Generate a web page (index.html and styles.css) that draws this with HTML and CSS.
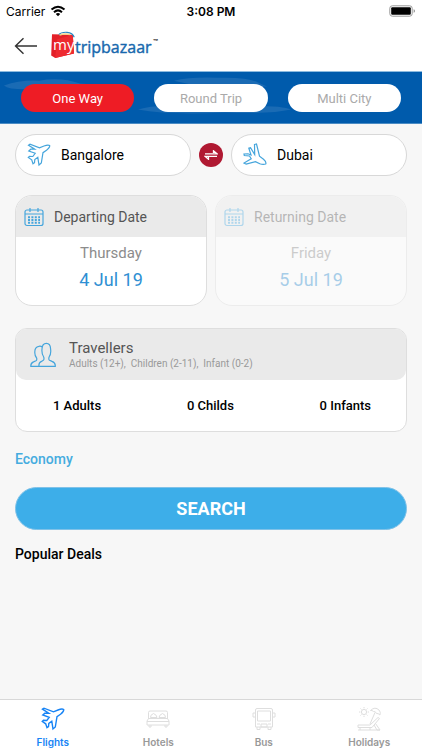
FILE: index.html
```html
<!DOCTYPE html>
<html lang="en">
<head>
<meta charset="utf-8">
<meta name="viewport" content="width=device-width, initial-scale=1">
<title>mytripbazaar</title>
<link rel="stylesheet" href="styles.css">
</head>
<body>
<svg class="defs" aria-hidden="true">
  <symbol id="plane" viewBox="0 0 24 24">
    <path d="M1.5 2.2 L3 1.2 L12.5 4.8 L17 3 Q21 1.4 22.7 2.5 Q23 4.5 19.5 7.2 L16 9.7 L14.3 20 L12 22 L10.8 14.3 L7.8 16.5 L7.5 19.7 L6 20.7 L4.7 16.8 L1.3 14.5 L2.5 13.3 L5.8 13.5 L8.2 10.3 L1.8 8 L3.8 6.2 L7.8 6.2 Z"/>
  </symbol>
  <symbol id="landing" viewBox="0 0 24 24">
    <path d="M11.5 1.5 L13.5 1 L16.5 13.2 L20.5 16.2 Q23.7 19 22.7 21 Q20 22 16.8 20.7 L12.5 18.6 L3.2 21.2 L1 20 L8.2 15.8 L6.5 13 L1.3 12.5 L1 11 L5 10.8 L8 12 L5.8 5.2 L7.5 4.8 L11.7 11.5 Z"/>
  </symbol>
  <symbol id="calendar" viewBox="0 0 20 20">
    <rect x="1" y="3" width="18" height="15.5" rx="2"/>
    <path d="M1 7H19M6 1V5M14 1V5"/>
    <path stroke-width="2" stroke-dasharray="2 1.4" d="M4 10.2H16M4 13H16M4 15.8H16"/>
  </symbol>
</svg>

<div class="app">
  <div class="status">
    <span class="carrier">Carrier
      <svg width="16" height="12" viewBox="0 0 16 12" aria-hidden="true"><g fill="none" stroke="#000" stroke-width="2"><path d="M1.5 4.6Q8-1.2 14.5 4.6M4 7.2Q8 3.6 12 7.2"/></g><path d="M5.8 9Q8 7.2 10.2 9L8 11.3Z"/></svg>
    </span>
    <time class="clock">3:08 PM</time>
    <svg class="battery" width="27" height="12" viewBox="0 0 27 12" aria-hidden="true"><rect x=".8" y=".8" width="22.4" height="10.4" rx="2.5" fill="#fff" stroke="#999"/><rect x="2.2" y="2.2" width="19.6" height="7.6" rx="1"/><path d="M24.7 4Q27.2 6 24.7 8Z" fill="#888"/></svg>
  </div>

  <header class="header">
    <button class="back" aria-label="Back"><svg width="24" height="18" viewBox="0 0 24 18"><path d="M23 9H1.5M9.5 1.2L1.5 9L9.5 16.8" fill="none" stroke="#333" stroke-width="1.4"/></svg></button>
    <svg class="logo" width="114" height="30" viewBox="0 0 114 30" role="img" aria-label="mytripbazaar">
      <path d="M2 3.2L22.8 3.8L24 22.5L5.2 27L1.2 24.5Z" fill="#e32028"/>
      <path d="M22.8 3.8L24 22.5L5.2 27L7.2 8.2Z" fill="#ee2a30"/>
      <path d="M8.8 3.6Q11 1 17 1.3Q22.8 1.8 24.2 6.2" fill="none" stroke="#2587c4" stroke-width="1.2"/>
      <path d="M9.5 4.2Q14 2 20.5 3.6" fill="none" stroke="#f4d48a" stroke-width="1.4"/>
      <text class="logo-my" x="3" y="19">my</text>
      <text class="logo-name" x="25" y="22">tripbazaar</text>
      <text class="logo-tm" x="103" y="14">™</text>
    </svg>
  </header>

  <nav class="trip-types" aria-label="Trip type">
    <svg class="clouds" viewBox="0 0 422 53" preserveAspectRatio="none" aria-hidden="true"><g fill="#1a6bb4"><path d="M4 14Q20 8 39 9Q61 5 80 12L120 15V18H25Q8 18 4 14Z"/><path d="M174 9Q190 5 218 6Q248 5 258 11L267 15H200Z"/><path d="M138 39Q155 34 178 36Q210 32 248 35Q283 35 291 39Q270 44 225 42Q170 45 138 39Z"/></g></svg>
    <button class="trip active" aria-pressed="true">One Way</button>
    <button class="trip" aria-pressed="false">Round Trip</button>
    <button class="trip" aria-pressed="false">Multi City</button>
  </nav>

  <main class="content">
    <div class="route">
      <button class="place"><svg class="line-icon" width="24" height="24"><use href="#plane"/></svg>Bangalore</button>
      <button class="swap" aria-label="Swap cities"><svg width="14" height="10" viewBox="0 0 14 10"><path d="M1 3.8H13L9.5 .8V3M13 6.3H1L4.5 9.3V7" fill="none" stroke="#fff" stroke-width="1.3"/></svg></button>
      <button class="place"><svg class="line-icon" width="24" height="24"><use href="#landing"/></svg>Dubai</button>
    </div>

    <div class="dates">
      <button class="card date">
        <span class="date-head"><svg class="line-icon" width="20" height="20"><use href="#calendar"/></svg>Departing Date</span>
        <span class="weekday">Thursday</span>
        <span class="day">4 Jul 19</span>
      </button>
      <button class="card date" disabled>
        <span class="date-head"><svg class="line-icon" width="20" height="20"><use href="#calendar"/></svg>Returning Date</span>
        <span class="weekday">Friday</span>
        <span class="day">5 Jul 19</span>
      </button>
    </div>

    <section class="card travellers">
      <div class="travellers-head">
        <svg class="line-icon" width="26" height="26" viewBox="0 0 26 26" aria-hidden="true"><path d="M9 24.3H25.3Q25.6 20.8 22 19.4L19.5 18.2Q18.4 17.5 19.1 15Q21.3 12.2 20.6 7Q20.4 1.4 16.4 1.4Q12.2 1.4 12 7Q11.5 12.2 13.7 15Q14.4 17.5 13.3 18.2L11.5 19.4Q8.4 20.8 9 24.3Z"/><path d="M12.4 5Q10.8 3.8 8.8 4.3Q4.6 5 4.8 10.5Q4.7 13.8 6.6 16Q7.2 18 6 18.7L3.5 19.9Q.6 21.2.8 24.3H9"/></svg>
        <div>
          <h2>Travellers</h2>
          <p>Adults (12+),&nbsp; Children (2-11),&nbsp; Infant (0-2)</p>
        </div>
      </div>
      <div class="counts">
        <button>1 Adults</button>
        <button>0 Childs</button>
        <button>0 Infants</button>
      </div>
    </section>

    <button class="cabin">Economy</button>
    <button class="search">SEARCH</button>
    <h2 class="deals">Popular Deals</h2>
  </main>

  <nav class="tabs" aria-label="Main">
    <a class="tab current" href="#flights" aria-current="page"><svg width="24" height="24"><use href="#plane"/></svg>Flights</a>
    <a class="tab" href="#hotels"><svg width="24" height="24" viewBox="0 0 24 24"><path d="M2.5 12V5.5Q2.5 4 4 4H20Q21.5 4 21.5 5.5V12M4.5 10.5Q4 8 7.5 6.5Q11 8 11 10.5ZM13 10.5Q13 8 16.5 6.5Q20 8 19.5 10.5ZM2.5 11.5H21.5L23 14V18H1V14ZM1 14.5H23M3 18V20H5V18M19 18V20H21V18"/></svg>Hotels</a>
    <a class="tab" href="#bus"><svg width="24" height="24" viewBox="0 0 24 24"><path d="M3.5 20V3Q3.5 1.5 5 1.5H19Q20.5 1.5 20.5 3V20ZM5.5 4H18.5V14H5.5ZM3.5 6H1V10H3M20.5 6H23V10H21M5 17H8M16 17H19M9 17H15V20H9ZM5 20V22.5H8V20M16 20V22.5H19V20"/></svg>Bus</a>
    <a class="tab" href="#holidays"><svg width="24" height="24" viewBox="0 0 24 24"><circle cx="7" cy="5" r="2.6"/><path d="M7 0V1.3M7 8.7V10M2 5H3.3M10.7 5H12M3.5 1.5L4.5 2.5M9.5 7.5L10.5 8.5M3.5 8.5L4.5 7.5M9.5 2.5L10.5 1.5M13.5 3.5Q18-.8 22 3Q24 5 23 8Q21 6 19.5 6.5Q18.5 4 16.5 4.5Q15 3 13.5 3.5ZM18 5.5L13 17M1 18H13L21 10.5L22.5 11.5L15 20.5H1ZM3 20.5V23M13 20.5V23M17 18L20 23H23L18.5 16.5M1 23H23"/></svg>Holidays</a>
  </nav>
</div>
</body>
</html>
```

FILE: styles.css
```css
* {
  box-sizing: border-box;
}

body {
  margin: 0;
  background: #f7f7f7;
  color: #000;
  font-family: Roboto, "Liberation Sans", sans-serif;
  font-size: 15px;
}

button {
  margin: 0;
  padding: 0;
  border: 0;
  background: none;
  color: inherit;
  font: inherit;
}

h2,
p {
  margin: 0;
}

svg {
  flex: none;
}

.defs {
  position: absolute;
  width: 0;
  height: 0;
}

.app {
  display: flex;
  flex-direction: column;
  min-height: 100vh;
}

.status {
  display: grid;
  grid-template-columns: 1fr auto 1fr;
  align-items: center;
  height: 22px;
  padding: 0 6px;
  background: #fff;
  font-family: Inter, Roboto, sans-serif;
  font-size: 12px;
}

.carrier {
  display: flex;
  align-items: center;
  gap: 5px;
}

.clock {
  font-weight: 600;
}

.battery {
  justify-self: end;
}

.header {
  display: flex;
  align-items: center;
  gap: 12px;
  height: 49px;
  padding: 0 14px 2px;
  background: #fff;
}

.back {
  display: flex;
}

.logo-my {
  fill: #fff;
  font-family: "Open Sans", sans-serif;
  font-size: 15px;
}

.logo-name {
  fill: #1768ad;
  stroke: #1768ad;
  stroke-width: 0.4;
  font-family: "Open Sans", sans-serif;
  font-size: 16px;
}

.logo-tm {
  fill: #222;
  font-family: Inter, sans-serif;
  font-size: 8px;
  font-weight: 600;
}

.trip-types {
  position: relative;
  display: flex;
  gap: 20px;
  padding: 12px 21px 11px;
  border-top: 1px solid #8dbbdf;
  border-bottom: 1px solid #4b8cc4;
  background: #005bac;
}

.clouds {
  position: absolute;
  inset: 0;
  width: 100%;
  height: 100%;
}

.trip {
  position: relative;
  flex: 1;
  height: 28px;
  border-radius: 14px;
  background: #fff;
  color: #aaa;
  font-size: 13px;
}

.trip.active {
  background: #ee1c25;
  color: #fff;
}

.content {
  display: flex;
  flex: 1;
  flex-direction: column;
  padding: 10px 15px;
}

.line-icon {
  fill: none;
  stroke: #45a5dc;
  stroke-width: 1.2;
}

.route {
  display: flex;
  align-items: center;
  gap: 8px;
}

.place {
  display: flex;
  flex: 1;
  align-items: center;
  gap: 10px;
  height: 42px;
  padding: 0 11px;
  border: 1px solid #d8d8d8;
  border-radius: 21px;
  background: #fff;
  font-size: 14px;
}

.swap {
  display: grid;
  place-items: center;
  width: 24px;
  height: 24px;
  border-radius: 50%;
  background: #b01932;
}

.dates {
  display: flex;
  gap: 8px;
  margin-top: 19px;
}

.card {
  overflow: hidden;
  border: 1px solid #dedede;
  border-radius: 17px;
  background: #fff;
}

.date {
  display: flex;
  flex: 1;
  flex-direction: column;
  height: 111px;
}

.date:disabled {
  opacity: 0.4;
}

.date-head {
  display: flex;
  align-items: center;
  gap: 10px;
  width: 100%;
  height: 41px;
  padding: 0 8px;
  background: #eaeaea;
  color: #555;
  font-size: 14px;
}

.weekday,
.day {
  width: 100%;
  text-align: center;
}

.weekday {
  margin-top: 6px;
  color: #8c8c8c;
  line-height: 20px;
}

.day {
  margin-top: 4px;
  color: #2f8fd3;
  font-size: 18px;
  line-height: 26px;
}

.travellers {
  margin-top: 22px;
  border-radius: 12px;
}

.travellers-head {
  display: flex;
  align-items: center;
  gap: 13px;
  height: 51px;
  padding: 0 14px;
  border-radius: 0 0 10px 10px;
  background: #eaeaea;
}

.travellers h2 {
  color: #555;
  font-size: 15px;
  font-weight: 400;
  line-height: 18px;
}

.travellers p {
  color: #999;
  font-size: 10px;
  line-height: 14px;
}

.counts {
  display: flex;
  justify-content: space-between;
  height: 51px;
  padding: 0 35px 0 37px;
  font-size: 13px;
  font-weight: 500;
}

.cabin {
  align-self: flex-start;
  margin-top: 17px;
  color: #45acdf;
  font-size: 14px;
  font-weight: 500;
  line-height: 20px;
}

.search {
  height: 43px;
  margin-top: 18px;
  border: 1px solid #80c2e8;
  border-radius: 22px;
  background: #3daee9;
  color: #fff;
  font-size: 18px;
  font-weight: 700;
}

.deals {
  margin-top: 14px;
  font-size: 14px;
  font-weight: 500;
  line-height: 20px;
}

.tabs {
  display: grid;
  grid-template-columns: repeat(4, 1fr);
  height: 51px;
  border-top: 1px solid #d8d8d8;
  background: #fff;
}

.tab {
  display: flex;
  flex-direction: column;
  align-items: center;
  gap: 5px;
  padding-top: 7px;
  color: #999;
  font-family: Inter, Roboto, sans-serif;
  font-size: 10px;
  font-weight: 600;
  line-height: 12px;
  text-decoration: none;
}

.tab svg {
  fill: none;
  stroke: #dedede;
  stroke-width: 1;
}

.tab.current {
  color: #1683f5;
}

.tab.current svg {
  stroke: #1683f5;
  stroke-width: 1.4;
}
```
